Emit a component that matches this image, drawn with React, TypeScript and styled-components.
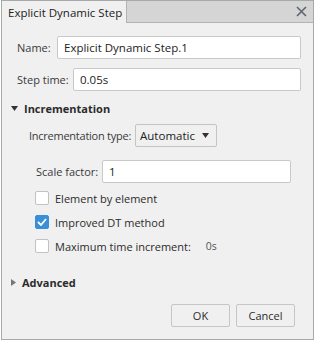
import React from "react";
import styled, { createGlobalStyle } from "styled-components";

const Global = createGlobalStyle`
  html, body { margin: 0; padding: 0; background: #ffffff; }
  body { font-family: "Open Sans", "Noto Sans", sans-serif; font-size: 11px; color: #2b2b2b; }
  * { box-sizing: border-box; }
`;

const Dialog = styled.div`
  margin-left: 1px;
  width: 313px;
  height: 340px;
  border: 1px solid #a9a9a9;
  background: #f0f0f0;
  display: flex;
  flex-direction: column;
`;

const TitleBar = styled.div`
  display: flex;
  height: 22px;
  flex: none;
`;

const Tab = styled.div`
  width: 124px;
  padding-left: 6px;
  display: flex;
  align-items: center;
  font-size: 11.5px;
  color: #222;
  background: #f0f0f0;
  white-space: nowrap;
`;

const TabFiller = styled.div`
  flex: 1;
  background: #d5d5d5;
  border-left: 1px solid #b3b3b3;
  border-bottom: 1px solid #b3b3b3;
  display: flex;
  align-items: center;
  justify-content: flex-end;
  padding-right: 6px;
`;

const Body = styled.div`
  display: flex;
  flex-direction: column;
  padding-right: 12px;
`;

const FieldRow = styled.div<{ $top: number; $left: number }>`
  display: flex;
  align-items: center;
  height: 23px;
  margin-top: ${(p) => p.$top}px;
  padding-left: ${(p) => p.$left}px;
`;

const Label = styled.span<{ $w?: number; $gap?: number; $ls?: number }>`
  ${(p) => (p.$w ? `width: ${p.$w}px;` : "")}
  margin-right: ${(p) => p.$gap ?? 0}px;
  letter-spacing: ${(p) => p.$ls ?? 0}px;
  flex: none;
  color: #3a3a3a;
  white-space: nowrap;
`;

const TextInput = styled.div<{ $w?: number }>`
  ${(p) => (p.$w ? `width: ${p.$w}px; flex: none;` : "flex: 1;")}
  height: 23px;
  background: #ffffff;
  border: 1px solid #c9c9c9;
  border-radius: 2px;
  padding-left: 6px;
  display: flex;
  align-items: center;
  color: #222;
  font-size: 11.5px;
`;

const Select = styled.div`
  width: 82px;
  height: 23px;
  border: 1px solid #c4c4c4;
  border-radius: 2px;
  background: #f0f0f0;
  display: flex;
  align-items: center;
  justify-content: space-between;
  padding: 0 7px 0 4px;
  color: #222;
  font-size: 11.5px;
`;

const SectionHeader = styled.div<{ $top: number }>`
  display: flex;
  align-items: center;
  height: 16px;
  margin-top: ${(p) => p.$top}px;
  padding-left: 9px;
  font-weight: 700;
  color: #2b2b2b;
  gap: 6px;
`;

const CheckRow = styled.div<{ $top?: number }>`
  display: flex;
  align-items: center;
  height: 24px;
  margin-top: ${(p) => p.$top ?? 0}px;
  padding-left: 33px;
  color: #2b2b2b;
  white-space: nowrap;
`;

const Box = styled.div<{ $checked?: boolean }>`
  width: 14px;
  height: 14px;
  border-radius: 2px;
  border: 1px solid ${(p) => (p.$checked ? "#3a8fd9" : "#c2c2c2")};
  background: ${(p) => (p.$checked ? "#3a8fd9" : "#ffffff")};
  display: flex;
  align-items: center;
  justify-content: center;
  margin-right: 6px;
  flex: none;
`;

const Hint = styled.span`
  margin-left: 15px;
  font-size: 10.5px;
  color: #555;
`;

const Footer = styled.div`
  display: flex;
  justify-content: flex-end;
  gap: 6px;
  margin-top: 14px;
  padding-right: 6px;
`;

const Button = styled.div`
  width: 59px;
  height: 23px;
  border: 1px solid #c6c6c6;
  border-radius: 2px;
  background: #f0f0f0;
  display: flex;
  align-items: center;
  justify-content: center;
  color: #2b2b2b;
`;

const Caret = ({ dir, color }: { dir: "down" | "right"; color: string }) =>
  dir === "down" ? (
    <svg width="7" height="5" viewBox="0 0 7 5">
      <path d="M0 0 L7 0 L3.5 5 Z" fill={color} />
    </svg>
  ) : (
    <svg width="5" height="7" viewBox="0 0 5 7">
      <path d="M0 0 L5 3.5 L0 7 Z" fill={color} />
    </svg>
  );

export default function App() {
  return (
    <>
      <Global />
      <Dialog>
        <TitleBar>
          <Tab>Explicit Dynamic Step</Tab>
          <TabFiller>
            <svg width="11" height="11" viewBox="0 0 11 11">
              <path d="M1 1 L10 10 M10 1 L1 10" stroke="#5f6570" strokeWidth="1.6" />
            </svg>
          </TabFiller>
        </TitleBar>
        <Body>
          <FieldRow $top={13} $left={15}>
            <Label $w={40}>Name:</Label>
            <TextInput>Explicit Dynamic Step.1</TextInput>
          </FieldRow>
          <FieldRow $top={9} $left={15}>
            <Label $w={56}>Step time:</Label>
            <TextInput>0.05s</TextInput>
          </FieldRow>
          <SectionHeader $top={9}>
            <Caret dir="down" color="#333" />
            Incrementation
          </SectionHeader>
          <FieldRow $top={8} $left={27}>
            <Label $gap={4} $ls={-0.25}>Incrementation type:</Label>
            <Select>
              Automatic
              <Caret dir="down" color="#333" />
            </Select>
          </FieldRow>
          <FieldRow $top={13} $left={34}>
            <Label $w={66}>Scale factor:</Label>
            <TextInput $w={189}>1</TextInput>
          </FieldRow>
          <CheckRow $top={3}>
            <Box />
            Element by element
          </CheckRow>
          <CheckRow>
            <Box $checked>
              <svg width="10" height="8" viewBox="0 0 10 8">
                <path d="M1 4 L4 7 L9 1" stroke="#fff" strokeWidth="1.8" fill="none" />
              </svg>
            </Box>
            Improved DT method
          </CheckRow>
          <CheckRow>
            <Box />
            Maximum time increment:
            <Hint>0s</Hint>
          </CheckRow>
          <SectionHeader $top={16}>
            <Caret dir="right" color="#777" />
            Advanced
          </SectionHeader>
          <Footer>
            <Button>OK</Button>
            <Button>Cancel</Button>
          </Footer>
        </Body>
      </Dialog>
    </>
  );
}
